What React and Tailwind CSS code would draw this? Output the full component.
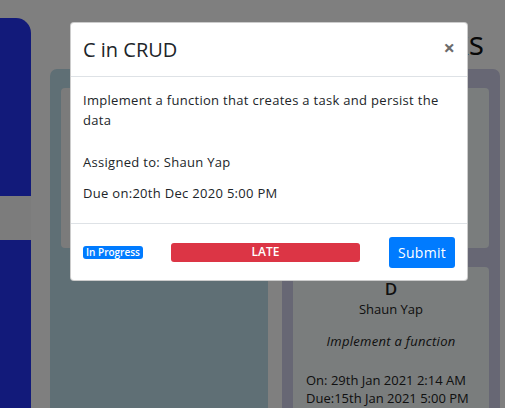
import React from "react";

const font = { fontFamily: '"Open Sans", "Liberation Sans", sans-serif' };

const Sidebar = () => (
  <div className="mt-[18px] w-[31px] shrink-0 rounded-tr-[15px] bg-[#2434f4] flex flex-col">
    <div className="h-[178px]"></div>
    <div className="h-[44px] bg-[#f8f8f8]"></div>
    <div className="flex-1"></div>
  </div>
);

const TaskCard = ({ title, owner, desc, on, due }) => (
  <div className="h-[160px] shrink-0 rounded-[4px] bg-[#f4fafa] px-[13px] pt-[12px] text-[13px] text-[#222] overflow-hidden">
    <div className="text-center text-[17px] font-semibold leading-[20px]">{title}</div>
    <div className="text-center leading-[20px]">{owner}</div>
    <div className="mt-[12px] h-[25px] overflow-hidden px-[12px] text-center italic leading-[20px] tracking-[0.3px]">
      {desc}
    </div>
    <div className="mt-[15px] leading-[18px]">On: {on}</div>
    <div className="leading-[18px]">Due:{due}</div>
  </div>
);

const Board = () => (
  <div className="flex-1 pl-[19px] pr-[5px]">
    <div className="flex h-[69px] items-start justify-end pr-[16px] pt-[25px] text-[32px] leading-[36px] text-[#111]">
      Tasks
    </div>
    <div className="grid grid-cols-2 gap-[14px]">
      <div className="h-[339px] rounded-t-[7px] bg-[#bedeea] px-[11px] pt-[19px]">
        <div className="h-[160px] rounded-[4px] bg-[#f6f6f6]"></div>
      </div>
      <div className="h-[339px] rounded-t-[7px] bg-[#cecee8] px-[11px] pt-[19px] flex flex-col gap-[19px]">
        <TaskCard
          title="R"
          owner="Shaun Yap"
          desc="Implement a function that reads a task"
          on="29th Jan 2021 2:14 AM"
          due="15th Jan 2021 5:00 PM"
        />
        <TaskCard
          title="D"
          owner="Shaun Yap"
          desc="Implement a function that deletes a task"
          on="29th Jan 2021 2:14 AM"
          due="15th Jan 2021 5:00 PM"
        />
      </div>
    </div>
  </div>
);

const Modal = () => (
  <div className="absolute left-[70px] top-[22px] w-[398px] rounded-[4px] border border-black/20 bg-white text-[#212529]">
    <div className="flex h-[54px] items-center justify-between border-b border-[#dee2e6] pl-[12px] pr-[12px]">
      <h5 className="text-[20px] leading-[24px] text-[#212529]">C in CRUD</h5>
      <button className="mb-[4px] text-[20px] font-bold leading-none text-[#6b6b6b]">×</button>
    </div>
    <div className="h-[146px] px-[12px] pt-[13px] text-[13px] leading-[20px] tracking-[0.3px]">
      <p>Implement a function that creates a task and persist the data</p>
      <p className="mt-[22px]">Assigned to: Shaun Yap</p>
      <p className="mt-[11px]">Due on:20th Dec 2020 5:00 PM</p>
    </div>
    <div className="flex h-[57px] items-center border-t border-[#dee2e6] pl-[12px] pr-[12px]">
      <span className="rounded-[3px] bg-[#007bff] px-[3px] text-[10px] font-semibold leading-[13px] text-white">
        In Progress
      </span>
      <div className="ml-[28px] flex h-[19px] w-[189px] items-center justify-center rounded-[3px] bg-[#dc3545] text-[12px] font-semibold text-white">
        LATE
      </div>
      <button className="ml-auto h-[31px] w-[66px] rounded-[3px] bg-[#007bff] text-[14px] tracking-[0.3px] text-white">
        Submit
      </button>
    </div>
  </div>
);

export default function App() {
  return (
    <div className="relative h-[408px] w-[505px] overflow-hidden bg-white" style={font}>
      <div className="flex h-full">
        <Sidebar />
        <Board />
      </div>
      <div className="absolute inset-0 bg-black/50"></div>
      <Modal />
    </div>
  );
}
